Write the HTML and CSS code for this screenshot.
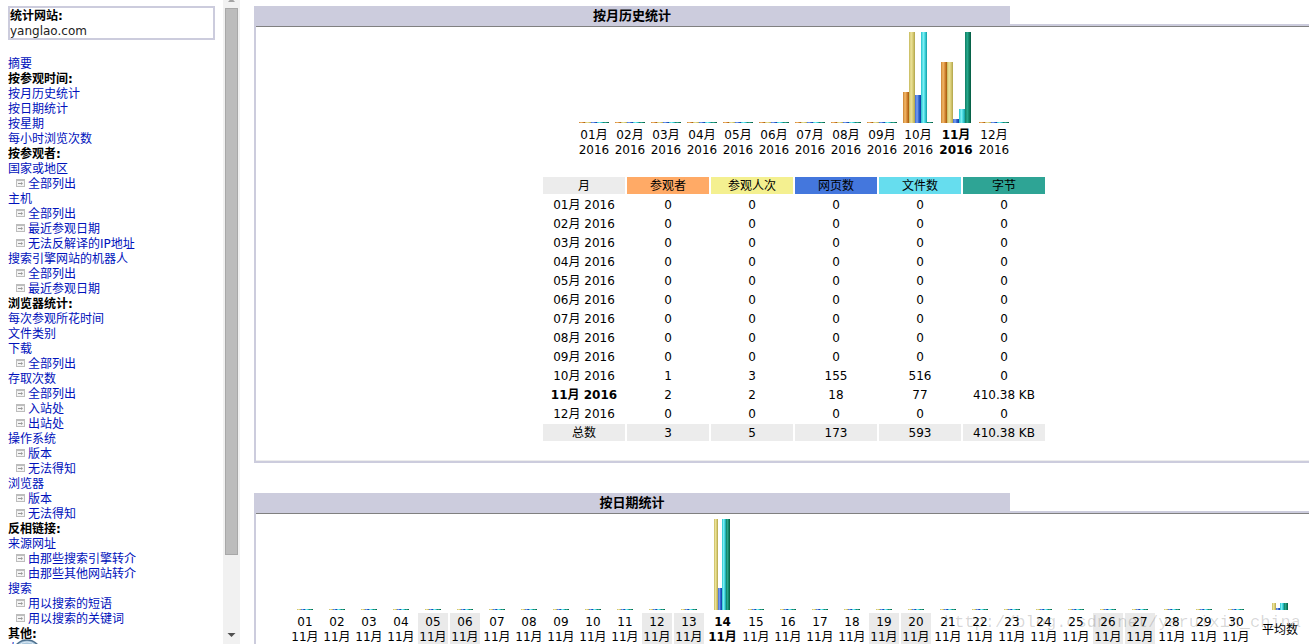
FILE: index.html
```html
<!DOCTYPE html>
<html lang="zh-CN">
<head>
<meta charset="utf-8">
<title>yanglao.com 统计</title>
<link rel="stylesheet" href="styles.css">
</head>
<body>
<nav class="sidebar">
  <div class="menu" id="menu">
    <div class="site"><strong>统计网站:</strong><span>yanglao.com</span></div>
  </div>
  <div class="scroll">
    <svg class="arrow-up" viewBox="0 0 17 8"><path d="M5 2h7L8.500-2z"/></svg>
    <div class="thumb"></div>
    <svg class="arrow-down" viewBox="0 0 17 17"><path d="M4.500 6h8L8.500 10z"/></svg>
  </div>
  <svg class="orb" viewBox="0 0 30 30"><circle cx="15" cy="15" r="14" fill="#a9c6dc" stroke="#4d6f8c" stroke-width="1.500"/><circle cx="15" cy="15" r="12" fill="none" stroke="#dbe9f3"/></svg>
</nav>
<main class="main">
  <section class="report">
    <h2 class="title">按月历史统计</h2>
    <div class="body">
      <div class="chart months" id="months"></div>
      <table class="data">
        <thead><tr><th class="c-none">月</th><th class="c-u">参观者</th><th class="c-v">参观人次</th><th class="c-p">网页数</th><th class="c-h">文件数</th><th class="c-k">字节</th></tr></thead>
        <tbody id="rows"></tbody>
        <tfoot><tr><td>总数</td><td>3</td><td>5</td><td>173</td><td>593</td><td>410.38 KB</td></tr></tfoot>
      </table>
    </div>
  </section>
  <section class="report">
    <h2 class="title">按日期统计</h2>
    <div class="body">
      <div class="chart days" id="days"></div>
    </div>
  </section>
  <div class="watermark">http://blog.csdn.net/yaruixin_china</div>
</main>
<script src="script.js"></script>
</body>
</html>
```
FILE: styles.css
```css
* { box-sizing: border-box; }
body {
  margin: 0;
  height: 100vh;
  display: flex;
  overflow: hidden;
  background: #fff;
  color: #000;
  font: 12px/15px "DejaVu Sans", "Noto Sans CJK SC", sans-serif;
}
.sidebar { position: relative; flex: 0 0 240px; display: flex; overflow: hidden; }
.menu { flex: 1; padding: 6px 8px 0; overflow: hidden; }
.site { height: 34px; padding-top: 1px; border: 2px solid #ccccdd; display: flex; flex-direction: column; margin-bottom: 17px; }
.site span { color: #222; }
.menu .group, .menu .item { display: block; height: 15px; white-space: nowrap; }
.menu a { color: #0011bb; text-decoration: none; }
.menu .sub { display: flex; align-items: flex-start; gap: 3px; height: 15px; padding-left: 8px; white-space: nowrap; }
.sub svg { width: 9px; height: 8px; flex: none; margin-top: 2px; }
.scroll { flex: 0 0 17px; display: flex; flex-direction: column; background: #f1f1f1; }
.scroll svg { display: block; width: 17px; fill: #505050; }
.scroll .arrow-up { height: 8px; fill: #a3a3a3; }
.arrow-down { height: 17px; margin-top: auto; }
.thumb { height: 85%; margin: 0 2px; background: #bcbcbc; border: 1px solid #a8a8a8; }
.orb { position: absolute; left: 12px; bottom: -25px; width: 30px; height: 30px; }
.main { position: relative; flex: 1; min-width: 0; overflow: hidden; padding: 6px 0 0 14px; }
.report { margin: 0 -25px 30px 0; }
.title { margin: 0; width: 70%; height: 18px; background: #ccccdd; font-size: 13px; line-height: 20px; text-align: center; }
.body {
  border: 2px solid #ccccdd;
  border-right: 0;
  box-shadow: inset 0 1px #808080, inset 0 -1px #ececec;
  padding: 6px 2px 18px 0;
}
.chart { display: flex; justify-content: center; gap: 2px; }
.col { flex: 0 0 34px; text-align: center; white-space: nowrap; }
.col.current { flex-basis: 38px; font-weight: bold; }
.days .col { flex-basis: 30px; }
.days .col.current { flex-basis: 33px; }
.days .col.spacer { flex-basis: 7px; }
.days .col.average { flex-basis: 36px; }
.bars { height: 91px; display: flex; justify-content: center; align-items: flex-end; margin-bottom: 3px; }
.bar { width: 6px; }
.days .bar { width: 4px; }
.label { display: flex; flex-direction: column; align-items: center; padding: 2px 0 0; min-height: 32px; justify-content: center; }
.weekend .label { background: #eaeaea; }
.bar.u { background: linear-gradient(90deg, #c98232, #f3b969 35%, #d78a38 65%, #a3560a); }
.bar.v { background: linear-gradient(90deg, #c5b95b, #ece29a 35%, #d9cd75 65%, #b0a34a); }
.bar.p { background: linear-gradient(90deg, #3c69d2, #7ba0f2 35%, #2e62cc 65%, #0d3b9e); }
.bar.h { background: linear-gradient(90deg, #22c3cf, #7ff0f5 40%, #43d8df 65%, #129ba2); }
.bar.k { background: linear-gradient(90deg, #0e7c63, #27a88c 40%, #128568 65%, #04583f); }
.data { border-collapse: separate; border-spacing: 2px; margin: 17px auto 0; table-layout: fixed; width: 506px; }
.data th, .data td { height: 17px; padding: 2px 1px 0; font-weight: normal; text-align: center; white-space: nowrap; line-height: 15px; }
.data .current { font-weight: bold; }
.data tfoot td, .c-none { background: #ececec; }
.c-u { background: #ffaa66; }
.c-v { background: #f4f090; }
.c-p { background: #4477dd; }
.c-h { background: #66ddee; }
.c-k { background: #2ea495; }
.watermark {
  position: absolute;
  right: 8px;
  bottom: 10px;
  font: 17px/22px "Liberation Mono", monospace;
  color: rgba(0, 0, 0, 0.16);
  pointer-events: none;
}
```
FILE: script.js
```js
// "#" starts a group heading, "-" a sub-entry, anything else is a link.
const entries = [
  "摘要", "#按参观时间:", "按月历史统计", "按日期统计", "按星期", "每小时浏览次数",
  "#按参观者:", "国家或地区", "-全部列出", "主机", "-全部列出", "-最近参观日期", "-无法反解译的IP地址",
  "搜索引擎网站的机器人", "-全部列出", "-最近参观日期",
  "#浏览器统计:", "每次参观所花时间", "文件类别", "下载", "-全部列出", "存取次数", "-全部列出", "-入站处", "-出站处",
  "操作系统", "-版本", "-无法得知", "浏览器", "-版本", "-无法得知",
  "#反相链接:", "来源网址", "-由那些搜索引擎转介", "-由那些其他网站转介", "搜索", "-用以搜索的短语", "-用以搜索的关键词",
  "#其他:", "杂项"
];
const icon = '<svg viewBox="0 0 9 8"><path d="M0 0h9v8H0z" fill="#bdbdbd"/><path d="M1 2h7v5H1z" fill="#f4f4f4"/><path d="M2 4h3V3l2 1.500L5 6V5H2z" fill="#999"/></svg>';
document.getElementById("menu").insertAdjacentHTML("beforeend", entries.map(e => {
  if (e[0] === "#") return `<strong class="group">${e.slice(1)}</strong>`;
  if (e[0] === "-") return `<div class="sub">${icon}<a href="#">${e.slice(1)}</a></div>`;
  return `<a class="item" href="#">${e}</a>`;
}).join(""));

const pad = n => String(n).padStart(2, "0");
const column = (cls, keys, heights, lines) =>
  `<div class="col ${cls}"><div class="bars">${[...keys].map((k, i) =>
    `<div class="bar ${k}" style="height:${heights[i]}px"></div>`).join("")}</div>` +
  `<div class="label">${lines.map(l => `<span>${l}</span>`).join("")}</div></div>`;

const monthBars = { 10: [31, 91, 28, 91, 1], 11: [61, 61, 4, 14, 91] };
const monthData = { 10: ["1", "3", "155", "516", "0"], 11: ["2", "2", "18", "77", "410.38 KB"] };
let chart = "", rows = "";
for (let m = 1; m <= 12; m++) {
  const cls = m === 11 ? "current" : "";
  chart += column(cls, "uvphk", monthBars[m] || [1, 1, 1, 1, 1], [pad(m) + "月", "2016"]);
  rows += `<tr><td class="${cls}">${pad(m)}月 2016</td>` +
    (monthData[m] || ["0", "0", "0", "0", "0"]).map(v => `<td>${v}</td>`).join("") + "</tr>";
}
document.getElementById("months").innerHTML = chart;
document.getElementById("rows").innerHTML = rows;

let days = "";
for (let d = 1; d <= 30; d++) {
  const cls = d === 14 ? "current" : [5, 6, 12, 13, 19, 20, 26, 27].includes(d) ? "weekend" : "";
  days += column(cls, "vphk", d === 14 ? [91, 22, 91, 91] : [1, 1, 1, 1], [pad(d), "11月"]);
}
days += '<div class="col spacer"></div>' + column("average", "vphk", [7, 2, 7, 7], ["平均数"]);
document.getElementById("days").innerHTML = days;
```
